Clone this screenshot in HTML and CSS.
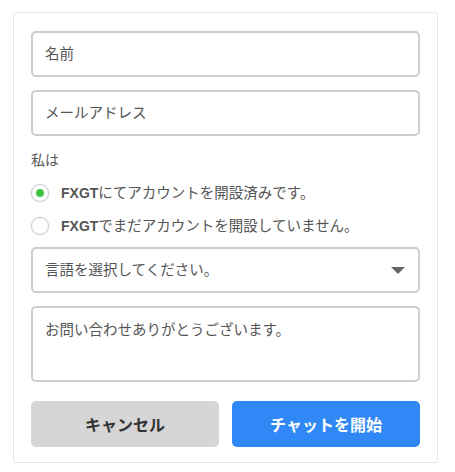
FILE: index.html
```html
<!DOCTYPE html>
<html lang="ja">
<head>
<meta charset="utf-8">
<title>Chat</title>
<link rel="stylesheet" href="styles.css">
</head>
<body>
<form class="card">
  <input class="field" type="text" placeholder="名前">
  <input class="field field-gap" type="email" placeholder="メールアドレス">
  <div class="label">私は</div>
  <label class="radio-row">
    <span class="radio checked"></span>
    <span class="radio-text"><b>FXGT</b>にてアカウントを開設済みです。</span>
  </label>
  <label class="radio-row">
    <span class="radio"></span>
    <span class="radio-text"><b>FXGT</b>でまだアカウントを開設していません。</span>
  </label>
  <div class="select-wrap">
    <select class="field select">
      <option>言語を選択してください。</option>
    </select>
    <svg class="caret" width="14" height="7" viewBox="0 0 14 7"><path d="M0 0H14L7 7Z" fill="#666"/></svg>
  </div>
  <textarea class="field textarea" placeholder="お問い合わせありがとうございます。"></textarea>
  <div class="buttons">
    <button type="button" class="btn btn-cancel">キャンセル</button>
    <button type="button" class="btn btn-start">チャットを開始</button>
  </div>
</form>
</body>
</html>
```
FILE: styles.css
```css
html, body {
  margin: 0;
  padding: 0;
  background: #fff;
}
body {
  font-family: "Liberation Sans", "Noto Sans CJK JP", sans-serif;
  color: #555;
}
.card {
  margin: 12px 0 0 13px;
  width: 425px;
  box-sizing: border-box;
  border: 1px solid #e6e6e6;
  border-radius: 3px;
  padding: 18px 17px 15px;
  display: flex;
  flex-direction: column;
}
.field {
  display: block;
  width: 100%;
  height: 46px;
  box-sizing: border-box;
  border: 2px solid #cdcdcd;
  border-radius: 5px;
  padding: 0 12px;
  margin: 0;
  font-family: "Liberation Sans", "Noto Sans CJK JP", sans-serif;
  font-size: 14.5px;
  color: #555;
  background: #fff;
  outline: none;
}
.field::placeholder {
  color: #555;
  opacity: 1;
}
.field-gap {
  margin-top: 13px;
}
.label {
  margin-top: 14px;
  margin-bottom: 6px;
  font-size: 14px;
  line-height: 20px;
  height: 20px;
  color: #555;
}
.radio-row {
  display: flex;
  align-items: center;
  height: 33px;
  gap: 12px;
  font-size: 14.5px;
  line-height: 20px;
  color: #555;
}
.radio {
  width: 18px;
  height: 18px;
  box-sizing: border-box;
  border: 1.5px solid #cbcbcb;
  border-radius: 50%;
  box-shadow: 0 0 2px rgba(0, 0, 0, 0.12);
  display: flex;
  align-items: center;
  justify-content: center;
  flex: none;
  background: #fff;
}
.radio.checked::after {
  content: "";
  width: 8px;
  height: 8px;
  border-radius: 50%;
  background: #3fc23f;
}
.radio-text b {
  font-weight: 700;
  font-size: 14px;
}
.select-wrap {
  position: relative;
  margin-top: 5px;
}
.select {
  appearance: none;
  -webkit-appearance: none;
}
.caret {
  position: absolute;
  right: 15px;
  top: 20px;
  pointer-events: none;
}
.textarea {
  margin-top: 13px;
  height: 76px;
  padding: 12px 12px;
  line-height: 20px;
  resize: none;
}
.buttons {
  display: flex;
  gap: 13px;
  margin-top: 19px;
}
.btn {
  flex: 1;
  height: 46px;
  border: none;
  border-radius: 5px;
  font-family: "Liberation Sans", "Noto Sans CJK JP", sans-serif;
  font-size: 16px;
  font-weight: 700;
  cursor: pointer;
}
.btn-cancel {
  background: #d6d6d6;
  color: #333;
}
.btn-start {
  background: #2f88f5;
  color: #fff;
}
```
